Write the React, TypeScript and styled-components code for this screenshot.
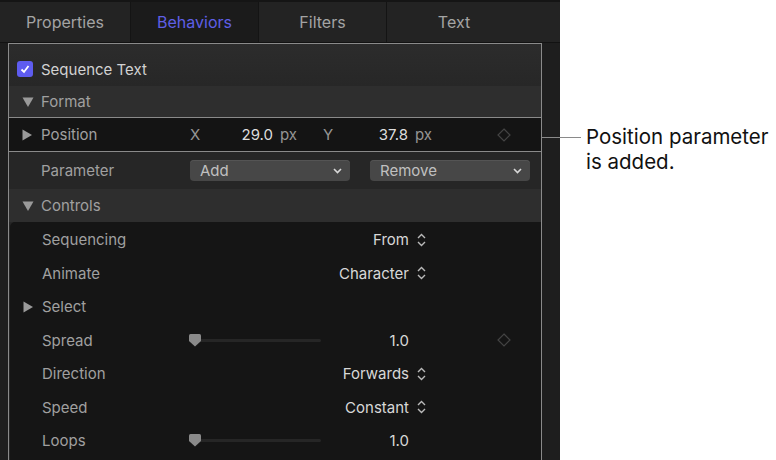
import styled, { createGlobalStyle } from "styled-components";

const GlobalStyle = createGlobalStyle`
  *, *::before, *::after {
    box-sizing: border-box;
  }
  body {
    margin: 0;
    background: #ffffff;
    font-family: Inter, "Liberation Sans", sans-serif;
  }
`;

const Page = styled.div`
  display: flex;
  width: 776px;
  height: 460px;
  overflow: hidden;
`;

const Panel = styled.div`
  width: 560px;
  height: 460px;
  flex-shrink: 0;
  background: #1e1e1e;
  display: flex;
  flex-direction: column;
  position: relative;
  z-index: 1;
`;

const Tabs = styled.div`
  display: flex;
  flex-shrink: 0;
  height: 43px;
  border-top: 2px solid #151515;
  border-bottom: 1px solid #121212;
`;

const Tab = styled.div<{ $active?: boolean; $w?: number; $padRight?: number }>`
  ${(p) => (p.$w ? `width: ${p.$w}px;` : "flex: 1;")}
  display: flex;
  align-items: center;
  justify-content: center;
  padding-right: ${(p) => p.$padRight || 0}px;
  background: ${(p) => (p.$active ? "#1b1b1b" : "#232323")};
  border-right: 1px solid #141414;
  color: ${(p) => (p.$active ? "#5f5fe6" : "#a4a4a4")};
  font-size: 16px;
  &:last-child {
    border-right: none;
  }
`;

const Body = styled.div`
  flex: 1;
  min-height: 0;
  display: flex;
  padding: 0 18px 0 8px;
`;

const Outline = styled.div`
  flex: 1;
  display: flex;
  flex-direction: column;
  border: 1px solid #8a8a8a;
  border-bottom: none;
  background: #262626;
`;

const Row = styled.div<{ $h: number; $bg?: string }>`
  height: ${(p) => p.$h}px;
  flex-shrink: 0;
  display: flex;
  align-items: center;
  background: ${(p) => p.$bg || "transparent"};
  font-size: 15px;
  color: #a0a0a0;
  position: relative;
`;

const TopRow = styled(Row)`
  background: linear-gradient(#2c2c2c, #272727);
  padding-top: 8px;
`;

const PositionRow = styled(Row)`
  border-top: 1px solid #8a8a8a;
  border-bottom: 1px solid #8a8a8a;
  &::after {
    content: "";
    position: absolute;
    left: 100%;
    top: 19px;
    width: 40px;
    height: 1px;
    background: #8a8a8a;
  }
`;

const Twisty = styled.div`
  width: 32px;
  flex-shrink: 0;
  display: flex;
  align-items: center;
  padding-left: 13px;
`;

const Label = styled.div<{ $bright?: boolean }>`
  width: 147px;
  flex-shrink: 0;
  color: ${(p) => (p.$bright ? "#d2d2d2" : "#a0a0a0")};
`;

const Check = styled.div`
  width: 16px;
  height: 16px;
  border-radius: 3px;
  background: #5e5cf0;
  display: flex;
  align-items: center;
  justify-content: center;
  margin-left: -5px;
`;

const Axis = styled.span<{ $w: number }>`
  width: ${(p) => p.$w}px;
  flex-shrink: 0;
  color: #959595;
`;

const Num = styled.span<{ $w: number }>`
  width: ${(p) => p.$w}px;
  flex-shrink: 0;
  text-align: right;
  color: #dedede;
`;

const Unit = styled.span<{ $w: number }>`
  width: ${(p) => p.$w}px;
  flex-shrink: 0;
  padding-left: 7px;
  color: #959595;
`;

const Keyframe = styled.div`
  margin-left: auto;
  margin-right: 30px;
  display: flex;
`;

const Popup = styled.div<{ $ml?: number }>`
  width: 160px;
  height: 21px;
  margin-left: ${(p) => p.$ml || 0}px;
  border-radius: 4px;
  background: #474747;
  box-shadow: inset 0 1px 0 #545454;
  display: flex;
  align-items: center;
  justify-content: space-between;
  padding: 0 8px 0 10px;
  color: #c0c0c0;
  font-size: 15px;
`;

const Content = styled.div`
  flex: 1;
  margin-left: 1px;
  padding-top: 1px;
  background: #151515;
  border-top-left-radius: 5px;
  display: flex;
  flex-direction: column;
`;

const Value = styled.div<{ $w: number }>`
  width: ${(p) => p.$w}px;
  flex-shrink: 0;
  text-align: right;
  color: #d8d8d8;
`;

const Stepper = styled.div`
  margin-left: 8px;
  display: flex;
`;

const Slider = styled.div`
  width: 132px;
  height: 13px;
  flex-shrink: 0;
  position: relative;
  display: flex;
  align-items: center;
`;

const Track = styled.div`
  flex: 1;
  height: 3px;
  background: #262626;
  border-radius: 2px;
`;

const Thumb = styled.svg`
  position: absolute;
  left: 0;
  top: 0;
`;

const Callout = styled.div`
  flex: 1;
  padding: 124px 0 0 26px;
  color: #111;
  font-size: 20.5px;
  line-height: 25px;
`;

const TriRight = () => (
  <svg width="10" height="12" viewBox="0 0 10 12">
    <path d="M0.5 0.5 L10 6 L0.5 11.5 Z" fill="#9a9a9a" />
  </svg>
);

const TriDown = () => (
  <svg width="12" height="10" viewBox="0 0 12 10">
    <path d="M0.5 0.5 L11.5 0.5 L6 10 Z" fill="#9a9a9a" />
  </svg>
);

const Diamond = () => (
  <svg width="14" height="14" viewBox="0 0 14 14">
    <path d="M7 1 L13 7 L7 13 L1 7 Z" fill="none" stroke="#444" strokeWidth="1.2" />
  </svg>
);

const UpDown = () => (
  <svg width="9" height="14" viewBox="0 0 9 14">
    <path d="M1 5 L4.5 1.5 L8 5 M1 9 L4.5 12.5 L8 9" fill="none" stroke="#bababa" strokeWidth="1.4" />
  </svg>
);

const ChevDown = () => (
  <svg width="9" height="6" viewBox="0 0 9 6">
    <path d="M1 1 L4.5 4.5 L8 1" fill="none" stroke="#d8d8d8" strokeWidth="1.6" />
  </svg>
);

const SliderControl = () => (
  <Slider>
    <Track />
    <Thumb width="12" height="13" viewBox="0 0 12 13">
      <path d="M0 1.5 Q0 0 1.5 0 H10.5 Q12 0 12 1.5 V7 L6 12.5 L0 7 Z" fill="#8a8a8a" />
    </Thumb>
  </Slider>
);

const popRows = [
  { label: "Sequencing", value: "From" },
  { label: "Animate", value: "Character" },
];

export default function App() {
  return (
    <Page>
      <GlobalStyle />
      <Panel>
        <Tabs>
          <Tab $w={131}>Properties</Tab>
          <Tab $w={128} $active>Behaviors</Tab>
          <Tab $w={128}>Filters</Tab>
          <Tab $padRight={39}>Text</Tab>
        </Tabs>
        <Body>
          <Outline>
            <TopRow $h={42}>
              <Twisty>
                <Check>
                  <svg width="12" height="12" viewBox="0 0 12 12">
                    <path d="M2.5 6.5 L5 9 L9.5 3" fill="none" stroke="#fff" strokeWidth="1.8" />
                  </svg>
                </Check>
              </Twisty>
              <Label $bright>Sequence Text</Label>
            </TopRow>
            <Row $h={31} $bg="#2e2e2e">
              <Twisty>
                <TriDown />
              </Twisty>
              <Label>Format</Label>
            </Row>
            <PositionRow $h={35} $bg="#141414">
              <Twisty>
                <TriRight />
              </Twisty>
              <Label>Position</Label>
              <Axis $w={22} style={{ paddingLeft: 2 }}>X</Axis>
              <Num $w={63}>29.0</Num>
              <Unit $w={50}>px</Unit>
              <Axis $w={20}>Y</Axis>
              <Num $w={65}>37.8</Num>
              <Unit $w={40}>px</Unit>
              <Keyframe>
                <Diamond />
              </Keyframe>
            </PositionRow>
            <Row $h={37} $bg="#262626">
              <Twisty />
              <Label>Parameter</Label>
              <Popup $ml={2}>
                Add
                <ChevDown />
              </Popup>
              <Popup $ml={20}>
                Remove
                <ChevDown />
              </Popup>
            </Row>
            <Row $h={33} $bg="#2e2e2e">
              <Twisty>
                <TriDown />
              </Twisty>
              <Label>Controls</Label>
            </Row>
            <Content>
              {popRows.map((r) => (
                <Row $h={33.5} key={r.label}>
                  <Twisty />
                  <Label>{r.label}</Label>
                  <Value $w={220}>{r.value}</Value>
                  <Stepper>
                    <UpDown />
                  </Stepper>
                </Row>
              ))}
              <Row $h={33.5}>
                <Twisty>
                  <TriRight />
                </Twisty>
                <Label>Select</Label>
              </Row>
              <Row $h={33.5}>
                <Twisty />
                <Label>Spread</Label>
                <SliderControl />
                <Value $w={88}>1.0</Value>
                <Keyframe>
                  <Diamond />
                </Keyframe>
              </Row>
              <Row $h={33.5}>
                <Twisty />
                <Label>Direction</Label>
                <Value $w={220}>Forwards</Value>
                <Stepper>
                  <UpDown />
                </Stepper>
              </Row>
              <Row $h={33.5}>
                <Twisty />
                <Label>Speed</Label>
                <Value $w={220}>Constant</Value>
                <Stepper>
                  <UpDown />
                </Stepper>
              </Row>
              <Row $h={33.5}>
                <Twisty />
                <Label>Loops</Label>
                <SliderControl />
                <Value $w={88}>1.0</Value>
              </Row>
            </Content>
          </Outline>
        </Body>
      </Panel>
      <Callout>
        Position parameter
        <br />
        is added.
      </Callout>
    </Page>
  );
}
